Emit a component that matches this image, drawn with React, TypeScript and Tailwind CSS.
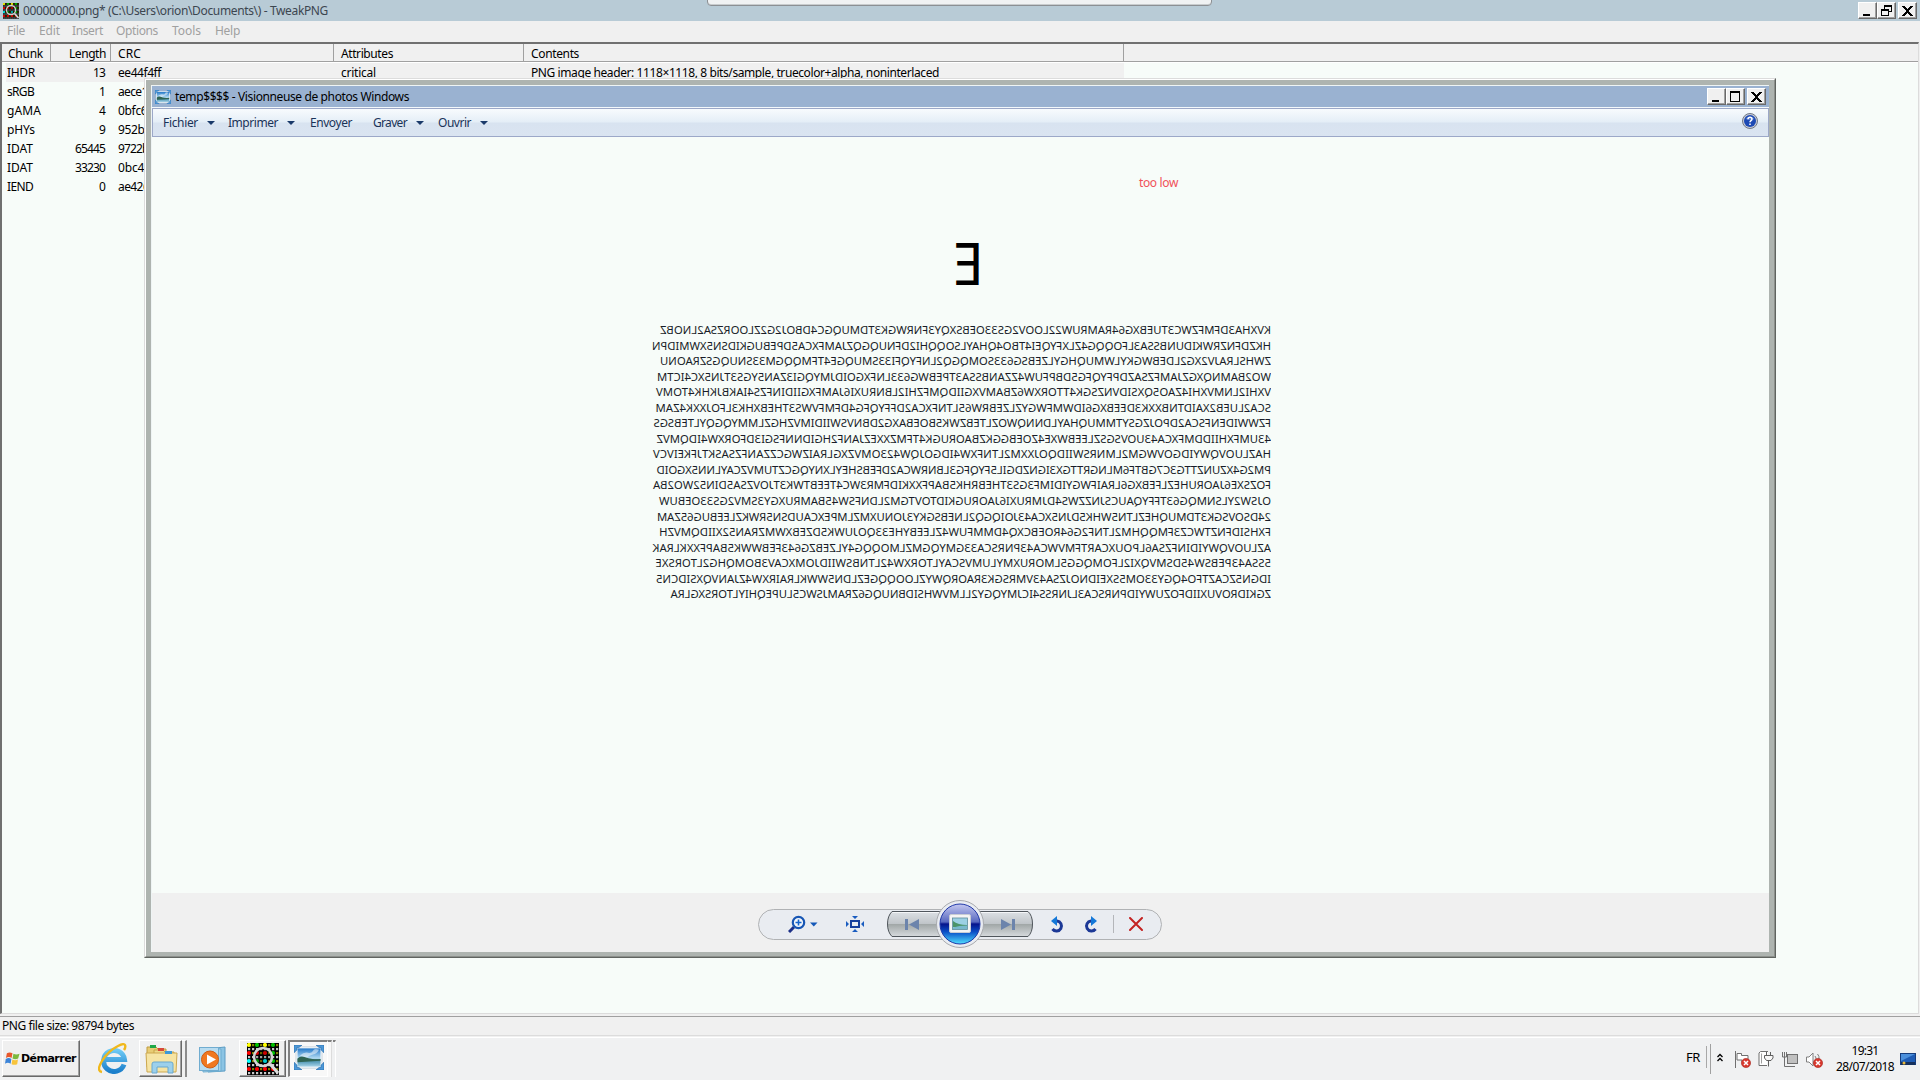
import React, { useLayoutEffect, useRef } from "react";

/** Text whose letter spacing is tuned so that it fills a given width. */
function Fit({ w, className = "", children }: { w: number; className?: string; children: string }) {
  const ref = useRef<HTMLSpanElement>(null);
  useLayoutEffect(() => {
    const el = ref.current;
    if (!el) return;
    el.style.letterSpacing = "0px";
    const natural = el.getBoundingClientRect().width;
    el.style.letterSpacing = `${(w - natural) / children.length}px`;
  }, [w, children]);
  return (
    <span ref={ref} className={`inline-block whitespace-pre ${className}`}>
      {children.split(/(J)/).map((part, i) =>
        part === "J" ? (
          <span key={i} className="font-['Lato']">J</span>
        ) : (
          part
        ),
      )}
    </span>
  );
}

const LINES: [string, number][] = [
  ["KVXHA3DFMFZWC3TUEBXG64RAMRUW22LOOV2GS33OEBSXQY3FNRWGK3TDMUQGC4DBOJ2G2ZLOORZSA2LNOBZ", 611],
  ["HKZDFNZRWKIDUNBSSA3LFOQQG4ZLXFYQEI4TBO4QHAYLSOQQHI2DFNUQGQZJAMFXCA5DPEBUGKIDSN5XWMIDPN", 619],
  ["ZWHSLRAJV2XG2LDEBWGKYLWMUQHGYLZEBSG633SOMQGQ2LNFYQFI33SMUQGE4TFMQQGM33SNUQGSZRAONU", 611],
  ["WO2BAMNQXGZJAMFZSAZDPFYQFG5DBPFUW4ZZANBSSA3TPEBWG633LNFXGOIDJMYQGI3ZAN5YGS3TJN5XC4ICTM", 614],
  ["VXHI2LNMVXHI4ZAO5QXSIDVNZSGK4TTORXW6ZBAMVXGIIDQMFZHI2LBNRUXI6JAMFXGIIDINFZS4IAKBJKHK4TOMV", 615],
  ["SCA2LUEB2XAIDTNBXXK3DEEBXG6IDWMFWGYZLZEBRW65LTNFXCA2DFFYQFG4DFMFVWS3THEBXHK3LFOJXXK4ZAM", 615.5],
  ["FZWWIDENFSCA2DPOJZGSYTMMUQHAYLDNNQWOZLTEBZWK5BOEBAXG2DBNVSWIIDIMVZHGZLMMYQGQYLTEBSGS", 617.5],
  ["43UMFXHIIDDMFXCA43UOVSGSZLEEBWXE4ZOEBGGKZBAORUGK4TFMZXXEZJANF2HGIDNNFSGI3DFORXW4IDQMVZ", 614.5],
  ["HAZLUOVQWYIDGOVWGM2LMNRSWIIDQOJXXM2LTNFXW4IDGOJQW423OMVZXGLRAIZWGCZZANFZSASKTJFKEIVCV", 618],
  ["PM2G4XZUNZTTG3C7GBTF6MLNGRTTGX3IGNZDGIL5FYQFG3LBNRWCA2DFEBSHEYLXNYQGCZTUMVZCAYLNN5XGOID", 614.5],
  ["FOZSXE6JAORUHEZLFEBXG6LRAIFWGYIDIMF3GS3THEBRHK5BAPFXXKIDFMR3WC4TEEBTWK3TJOVZSA5DIN52WO2BA", 618],
  ["OJSW2YLSNMQG63TFFYQAUCSJNZZWS4DJMRUXI6JAORUGKIDTOVTGM2LDNFSW45BAMRUXGY3SMV2GS33OEBUW", 612],
  ["24DSOVSGK3TDMUQHEZLTN5WHK5DJN5XCA43JOIQGQ2LNEBSGKY3JONUXMZLMPEXCAUDSN5RWKZLEEBUG65ZAM", 614],
  ["FXHSIDFNZTWCZ3FMQQHM2LTNF2G64ROEBCXQ4DMMFUW4ZLEEBYHE33QOJUWK5DZEBXWMZRAN52XIIDQMVZH", 612],
  ["AZLUOVQWYIDINFZSA6LPOUXCARTFMVWCA43PNRSCA33GMYQGMZLMOQQG4YLZEBZG643FEBWWK5BAPFXXKLRAK", 618.5],
  ["5SSA43PEBSW45DSMVQXI2LFOMQGG5LMORUXMYLUMVSCAYLTORXW42LTNBSWIIDJOMXCAV3BOMQHG2LTORSXE", 615.5],
  ["IDGN5ZCAZTFO4QGY33OM5SXEIDNOJZSA43VMRSGK3RAORQWYZLOOQQGEZLDN5WWKLRAIRXW4ZJANVQXSIDCN5", 615],
  ["ZGKIDROVUXIIDFOZUWYIDPNRSCA3LJNRSS4ICJMYQGY2LLMVWHSIDBNUQG6ZRAMJSWC5LUPEQHIYLTORSXGLRA", 600.5],
];

const ROWS: [string, number, string, number, string, number][] = [
  ["IHDR", 28, "13", 12, "ee44f4ff", 43],
  ["sRGB", 27, "1", 6, "aece1ce9", 47],
  ["gAMA", 34, "4", 6, "0bfc6105", 49],
  ["pHYs", 28, "9", 6, "952b0e1b", 53],
  ["IDAT", 26, "65445", 30, "9722bd0c", 48],
  ["IDAT", 26, "33230", 30, "0bc4e1a7", 53],
  ["IEND", 26, "0", 6, "ae426082", 50],
];

function CaptionButton({ children }: { children: React.ReactNode }) {
  return (
    <div className="flex h-[17px] w-[19px] items-center justify-center border border-t-white border-l-white border-r-[#696969] border-b-[#696969] bg-[#f0f0f0] shadow-[inset_-1px_-1px_0_#a0a0a0]">
      <svg width="13" height="13" viewBox="0 0 13 13" shapeRendering="crispEdges">
        {children}
      </svg>
    </div>
  );
}

const Minimize = () => <path d="M2 10h7v2H2z" />;
const Maximize = () => <path d="M1 1h10v11H1zM2 3v8h8V3z" fillRule="evenodd" />;
const Restore = () => <path d="M4 1h8v7H9v4H1V5h3zM5 3v2h4v2h2V3zM2 7v4h6V7z" fillRule="evenodd" />;
const Close = () => (
  <path d="M1 2h3v1h1v1h1v1h1V4h1V3h1V2h3v1h-1v1h-1v1H9v1H8v2h1v1h1v1h1v1h1v1H9v-1H8v-1H7V9H6v1H5v1H4v1H1v-1h1v-1h1V9h1V8h1V6H4V5H3V4H2V3H1z" />
);

function PngIcon({ size }: { size: number }) {
  const top = ["#ffff00", "#808000", "#00c000", "#808000", "#ffff00", "#808000", "#00c000", "#808000"];
  return (
    <svg width={size} height={size} viewBox="0 0 32 32">
      <rect width="32" height="32" fill="#000" />
      {Array.from({ length: 64 }, (_, i) => {
        const c = i % 8;
        const r = Math.floor(i / 8);
        let fill = "#808000";
        if (r === 0) fill = top[c];
        else if (r === 1 || r === 3 || r === 5 || r === 7) fill = "#c8c8c8";
        else if (r === 4) fill = c % 4 === 0 ? "#00ffff" : c % 4 === 2 ? "#00c000" : "#808000";
        else if (c % 2 === 0) fill = r === 2 && c === 6 ? "#00c000" : "#ff0000";
        const big = r % 2 === 0 && c % 2 === 0;
        return big ? (
          <circle key={i} cx={c * 4 + 2} cy={r * 4 + 2} r="2.1" fill={fill} />
        ) : (
          <rect key={i} x={c * 4 + 1} y={r * 4 + 1} width="2.2" height="2.2" fill={fill} />
        );
      })}
      <path d="M23 21l8 9" stroke="#dcdcdc" strokeWidth="3.2" />
      <circle cx="16" cy="14" r="9" fill="#000" fillOpacity="0.2" stroke="#d4d4d4" strokeWidth="2.6" />
    </svg>
  );
}

function PhotoIcon({ w, h }: { w: number; h: number }) {
  return (
    <svg width={w} height={h} viewBox="0 0 30 26" preserveAspectRatio="none" className="shrink-0">
      <defs>
        <linearGradient id="sky" x1="0" y1="0" x2="0" y2="1">
          <stop offset="0" stopColor="#2478c8" />
          <stop offset="0.55" stopColor="#b4dcf4" />
          <stop offset="0.6" stopColor="#4c8c9c" />
          <stop offset="0.75" stopColor="#5ca0bc" />
          <stop offset="1" stopColor="#a8d4e8" />
        </linearGradient>
      </defs>
      <rect x="2" y="2" width="26" height="22" fill="#f8fbfd" stroke="#a8bccc" strokeWidth="0.6" />
      <rect x="3.500" y="3.500" width="23" height="19" fill="url(#sky)" />
      <path d="M6 11q4-4 8-3t5-2 6-1q-2 4-6 5t-6 3-7-2z" fill="#fff" fillOpacity="0.5" />
      <path d="M3.500 14q3-3 7-1.500t8 2 8 0v2q-12 1-23 1.500z" fill="#2f6454" />
      <path d="M0 0h8L5 2.500H3V5L0 8zM22 0h8v8l-3-3V2.500h-2zM0 18l3 3v2.500h2L8 26H0zM30 18v8h-8l3-2.500h2V21z" fill="#4c98d8" stroke="#2a6cab" strokeWidth="0.7" />
    </svg>
  );
}

const Caret = () => (
  <svg width="8" height="4" viewBox="0 0 8 4">
    <path d="M0 0h8L4 4z" fill="#1a3a6a" />
  </svg>
);

function TaskButton({ className, children }: { className: string; children: React.ReactNode }) {
  return (
    <div className={`flex h-[37px] items-center border border-t-white border-l-white border-r-[#696969] border-b-[#696969] bg-[#f0f0f0] shadow-[inset_-1px_-1px_0_#a0a0a0] ${className}`}>
      {children}
    </div>
  );
}

const ErrorBadge = () => (
  <>
    <circle cx="12" cy="12" r="4.600" fill="#d8382e" stroke="#a82820" strokeWidth="0.6" />
    <path d="M10 10l4 4M14 10l-4 4" stroke="#fff" strokeWidth="1.500" />
  </>
);

function MainWindow() {
  return (
    <div className="flex h-[1037px] flex-col bg-[#f0f0f0]">
      <div className="flex h-[21px] items-center bg-[#b8cbd6] pr-[3px] pl-[3px]">
        <PngIcon size={16} />
        <Fit w={305} className="ml-[4px] text-[#3c4650]">
          {"00000000.png* (C:\\Users\\orion\\Documents\\) - TweakPNG"}
        </Fit>
        <div className="ml-auto flex">
          <CaptionButton><Minimize /></CaptionButton>
          <CaptionButton><Restore /></CaptionButton>
          <div className="w-[2px]" />
          <CaptionButton><Close /></CaptionButton>
        </div>
      </div>
      <div className="flex h-[21px] items-center pb-[2px] pl-[7px] text-[#a0a0a0]">
        <div className="w-[32px]"><Fit w={18}>File</Fit></div>
        <div className="w-[33px]"><Fit w={21}>Edit</Fit></div>
        <div className="w-[44px]"><Fit w={31}>Insert</Fit></div>
        <div className="w-[56px]"><Fit w={42}>Options</Fit></div>
        <div className="w-[43px]"><Fit w={29}>Tools</Fit></div>
        <Fit w={25}>Help</Fit>
      </div>
      <div className="mr-[1px] flex h-[972px] flex-col border-t-2 border-r border-b border-l-2 border-t-[#707070] border-r-[#dcdcdc] border-b-[#dcdcdc] border-l-[#707070] bg-[#f7fcf9]">
        <div className="flex h-[18px] shrink-0 items-center border-b border-[#a0a0a0] bg-[#f0f0f0]">
          <div className="flex h-[17px] w-[49px] items-center border-r border-[#a0a0a0] pt-[2px] pl-[6px]"><Fit w={35}>Chunk</Fit></div>
          <div className="flex h-[17px] w-[60px] items-center justify-end border-r border-[#a0a0a0] pt-[2px] pr-[4px]"><Fit w={37}>Length</Fit></div>
          <div className="flex h-[17px] w-[223px] items-center border-r border-[#a0a0a0] pt-[2px] pl-[7px]"><Fit w={23}>CRC</Fit></div>
          <div className="flex h-[17px] w-[190px] items-center border-r border-[#a0a0a0] pt-[2px] pl-[7px]"><Fit w={52}>Attributes</Fit></div>
          <div className="flex h-[17px] w-[600px] items-center border-r border-[#a0a0a0] pt-[2px] pl-[7px]"><Fit w={48}>Contents</Fit></div>
        </div>
        <div className="h-px shrink-0 bg-white" />
        {ROWS.map(([name, nw, len, lw, crc, cw], i) => (
          <div key={i} className={`ml-[4px] flex h-[19px] w-[1118px] shrink-0 items-center pl-[1px] ${i === 0 ? "bg-[#f0f0f0]" : ""}`}>
            <div className="w-[45px]"><Fit w={nw}>{name}</Fit></div>
            <div className="flex w-[53px] justify-end"><Fit w={lw}>{len}</Fit></div>
            <div className="w-[223px] pl-[13px]"><Fit w={cw}>{crc}</Fit></div>
            {i === 0 && (
              <>
                <div className="w-[190px] pl-[13px]"><Fit w={35}>critical</Fit></div>
                <div className="pl-[13px]"><Fit w={408}>PNG image header: 1118×1118, 8 bits/sample, truecolor+alpha, noninterlaced</Fit></div>
              </>
            )}
          </div>
        ))}
      </div>
      <div className="h-[2px]" />
      <div className="flex h-[20px] items-center border-t border-b border-t-[#a0a0a0] border-b-[#dcdcdc] pl-[2px]">
        <Fit w={132}>PNG file size: 98794 bytes</Fit>
      </div>
    </div>
  );
}

function ViewerWindow() {
  return (
    <div className="absolute top-[78px] left-[144px] h-[880px] w-[1632px] border-t border-r border-b border-l border-t-[#dcdcdc] border-r-[#606460] border-b-[#606460] border-l-[#dcdcdc] bg-[#aeb4b0]">
      <div className="h-full border-t border-r border-b border-l border-t-white border-r-[#8c908c] border-b-[#8c908c] border-l-white p-[5px] pb-[4px]">
        <div className="flex h-full flex-col border-t border-l border-[#eef4f4] bg-[#f0f0f0]">
          <div className="flex h-[21px] shrink-0 items-center bg-[#9ab2d1] pr-[3px] pl-[3px]">
            <PhotoIcon w={16} h={14} />
            <Fit w={234} className="ml-[4px]">temp$$$$ - Visionneuse de photos Windows</Fit>
            <div className="ml-auto flex">
              <CaptionButton><Minimize /></CaptionButton>
              <CaptionButton><Maximize /></CaptionButton>
              <div className="w-[2px]" />
              <CaptionButton><Close /></CaptionButton>
            </div>
          </div>
          <div className="h-[1px] shrink-0 bg-[#f4f8fb]" />
          <div className="flex h-[29px] shrink-0 items-center border border-[#9ca8c8] bg-[linear-gradient(#f8fbfd_0%,#e4eef7_48%,#d8e3f0_52%,#dae4f1_100%)] pl-[10px] text-[#1a3358]">
            <div className="flex w-[65px] items-center gap-[9px]"><Fit w={35}>Fichier</Fit><Caret /></div>
            <div className="flex w-[82px] items-center gap-[9px]"><Fit w={50}>Imprimer</Fit><Caret /></div>
            <div className="w-[63px]"><Fit w={42}>Envoyer</Fit></div>
            <div className="flex w-[65px] items-center gap-[9px]"><Fit w={34}>Graver</Fit><Caret /></div>
            <div className="flex items-center gap-[9px]"><Fit w={33}>Ouvrir</Fit><Caret /></div>
            <svg className="mr-[10px] mb-[3px] ml-auto" width="16" height="16" viewBox="0 0 16 16">
              <circle cx="8" cy="8" r="7.5" fill="#c8ccd4" stroke="#707888" />
              <circle cx="8" cy="8" r="6" fill="#1c49b4" />
              <path d="M3.5 6a5 4 0 0 1 9 0q-4.500 2-9 0z" fill="#7c9ce4" fillOpacity="0.6" />
              <path d="M6 6.200q0-2 2-2t2 1.800q0 1-1 1.700t-1 1.500M8 10.600v1.500" fill="none" stroke="#fff" strokeWidth="1.500" />
            </svg>
          </div>
          <div className="h-[756px] shrink-0 bg-[#f7fcf9]">
            <div className="flex h-[90px] items-center pt-[1px] pl-[987px] text-[12px] leading-none text-[#f0525a]">
              <Fit w={39}>too low</Fit>
            </div>
            <div className="flex h-[74px] items-center pb-[4px] pl-[800px] text-[59px] leading-none text-black">
              <span className="-scale-x-[0.95]">E</span>
            </div>
            <div className="ml-[501px] w-[618px] -scale-x-100 pt-[21px] text-[11.3px] text-[#181c28]">
              {LINES.map(([t, w], i) => (
                <div key={i} className="h-[15.56px] leading-[15.56px]">
                  <Fit w={w}>{t}</Fit>
                </div>
              ))}
            </div>
          </div>
          <div className="flex h-[58px] shrink-0 items-center justify-center pt-[4px] pr-[2px]">
            <div className="flex h-[31px] w-[404px] items-center rounded-full border border-[#b0b2b4] bg-[#e9ecf1] pl-[29px]">
              <svg width="30" height="18" viewBox="0 0 30 18">
                <path d="M1 17l5-5" stroke="#1c2f88" strokeWidth="3" />
                <circle cx="10.500" cy="7.500" r="5.700" fill="#f2f6fb" stroke="#1756b4" strokeWidth="2.200" />
                <path d="M7.500 7.500h6M10.500 4.500v6" stroke="#1464cc" strokeWidth="1.600" />
                <path d="M22 7.500h7.500l-3.750 4z" fill="#1458b8" />
              </svg>
              <svg className="ml-[28px]" width="18" height="16" viewBox="0 0 18 16">
                <rect x="5" y="5" width="8" height="6" fill="none" stroke="#153e9c" strokeWidth="2" />
                <path d="M6 0h6L9 3zM6 16h6l-3-3zM0 5v6l3-3zM18 5v6l-3-3z" fill="#1a5cc0" />
              </svg>
              <svg className="ml-[22px]" width="148" height="50" viewBox="0 0 148 50">
                <defs>
                  <linearGradient id="bar" x1="0" y1="0" x2="0" y2="1">
                    <stop offset="0" stopColor="#dde1e5" />
                    <stop offset="0.48" stopColor="#c0c5c9" />
                    <stop offset="0.52" stopColor="#a2a8a8" />
                    <stop offset="1" stopColor="#d6dadd" />
                  </linearGradient>
                  <linearGradient id="orb" x1="0" y1="0" x2="0" y2="1">
                    <stop offset="0" stopColor="#c4c8f0" />
                    <stop offset="0.45" stopColor="#5868c0" />
                    <stop offset="0.5" stopColor="#06148c" />
                    <stop offset="0.7" stopColor="#0a50c8" />
                    <stop offset="1" stopColor="#50e0ff" />
                  </linearGradient>
                </defs>
                <path d="M6 12.500h136q4.500 4 4.500 12.500T142 37.500H6Q1.500 33 1.500 25T6 12.500z" fill="url(#bar)" stroke="#50565c" />
                <path d="M6.500 13.500h135" stroke="#f4f6f8" />
                <circle cx="74" cy="25" r="23.500" fill="#e9ecf1" stroke="#a8aaae" />
                <circle cx="74" cy="25" r="20" fill="url(#orb)" stroke="#2038a8" />
                <rect x="63.500" y="15.500" width="21" height="18" rx="1.500" fill="#f4f4f4" stroke="#c8ccd4" />
                <rect x="66.500" y="19" width="15" height="11.500" fill="#9cd0e4" stroke="#5c8c9c" strokeWidth="0.800" />
                <path d="M67 22q5 4 14 4v2H67z" fill="#4c9468" />
                <path d="M67 28.500q6-2 14-2v3.500H67z" fill="#78b8cc" />
                <path d="M19 20h3v11h-3zM33 20v11l-10-5.500zM115 20v11l10-5.500zM126 20h3v11h-3z" fill="#6c84ac" />
              </svg>
              <svg className="ml-[17px]" width="13" height="17" viewBox="0 0 13 17">
                <path d="M4 5h2a5 5 0 1 1-4.500 8" fill="none" stroke="#1c3896" strokeWidth="3" />
                <path d="M0 5L6 0v10z" fill="#1478d8" />
              </svg>
              <svg className="ml-[20px]" width="13" height="17" viewBox="0 0 13 17">
                <path d="M9 5H7a5 5 0 1 0 4.500 8" fill="none" stroke="#1c3896" strokeWidth="3" />
                <path d="M13 5L7 0v10z" fill="#1478d8" />
              </svg>
              <div className="ml-[16px] h-[18px] w-[1px] bg-[#b4b6ba]" />
              <svg className="ml-[15px]" width="14" height="14" viewBox="0 0 14 14">
                <path d="M1 1l12 12M13 1L1 13" stroke="#c42222" strokeWidth="2" strokeLinecap="round" />
              </svg>
            </div>
          </div>
        </div>
      </div>
    </div>
  );
}

function Taskbar() {
  return (
    <div className="flex h-[43px] items-start border-t border-white bg-[#f0f1f2] pt-[2px] pl-[2px]">
      <TaskButton className="w-[78px] pl-[2px]">
        <svg width="15" height="15" viewBox="0 0 16 15">
          <path d="M2 2q3-2 6 0L7 7Q4 5 1 7z" fill="#e8582c" />
          <path d="M9 2.500q3 1.500 6.500 0L14 7.500q-3 1.500-6 0z" fill="#7cb83c" />
          <path d="M.8 8Q4 6 6.800 8L6 13Q3 11 0 13z" fill="#3c84d8" />
          <path d="M7.800 8.500q3 1.500 6 0L13 13.500q-3 1.500-6 0z" fill="#f8c43c" />
        </svg>
        <Fit w={55} className="ml-[1px] font-['DejaVu_Sans'] text-[11px] font-bold">Démarrer</Fit>
      </TaskButton>
      <svg className="mt-[3px] ml-[18px]" width="30" height="31" viewBox="0 0 30 31">
        <defs>
          <linearGradient id="ie" x1="0" y1="0" x2="0" y2="1">
            <stop offset="0" stopColor="#6cc8f4" />
            <stop offset="1" stopColor="#1c80cc" />
          </linearGradient>
        </defs>
        <path d="M26 21.500A10.500 10.500 0 1 1 26.500 16.500H8" fill="none" stroke="url(#ie)" strokeWidth="5" />
        <path d="M4 29Q-2 28 4 18T20 3q6-3 7-1t-1 5" fill="none" stroke="#f0b81c" strokeWidth="2.400" />
      </svg>
      <TaskButton className="ml-[11px] w-[43px] justify-center pl-[2px]">
        <svg width="34" height="31" viewBox="0 0 34 31">
          <path d="M2 4h9l2 2h8v18H2z" fill="#e8cc74" stroke="#c09c40" />
          <rect x="5" y="2" width="6" height="3" fill="#20a848" />
          <path d="M9 7h9l2 2h9v18H9z" fill="#f0d888" stroke="#c8a448" />
          <rect x="13" y="5" width="6" height="3" fill="#d84838" />
          <path d="M1 10h31l-1 19H2z" fill="#f6e4a4" stroke="#cca850" />
          <rect x="20" y="8" width="7" height="3" fill="#3c98d8" />
          <path d="M7 30V21q0-2 2-2h17q2 0 2 2v9h-5v-6H12v6z" fill="#9cd0ec" stroke="#68a8d0" />
        </svg>
      </TaskButton>
      <div className="h-[37px] w-[5px] border-t border-r-2 border-t-white border-r-[#8c8c8c] bg-[#f0f0f0]" />
      <svg className="mt-[6px] ml-[12px]" width="27" height="27" viewBox="0 0 27 27">
        <path d="M7 3l19-2v24l-17 1z" fill="#8cc4e4" stroke="#5c9cc4" />
        <path d="M4 2l18 1v22l-18 1z" fill="#a8d4ec" stroke="#6cacd0" />
        <rect x="0.500" y="1.500" width="19" height="23" fill="#b8dcf0" stroke="#70acd0" />
        <circle cx="11" cy="13.500" r="8.500" fill="#f07820" stroke="#d05c10" />
        <path d="M8 8.500l9 5-9 5z" fill="#fff" />
      </svg>
      <TaskButton className="ml-[13px] w-[47px] justify-center">
        <PngIcon size={32} />
      </TaskButton>
      <div className="ml-[2px] flex h-[37px] w-[40px] items-center justify-center border-t-2 border-r border-b border-l-2 border-t-[#808080] border-r-white border-b-white border-l-[#808080] bg-[#f8f8f8] pb-[3px]">
        <PhotoIcon w={30} h={25} />
      </div>
      <div className="h-[37px] w-[4px] border-t-2 border-r border-t-[#808080] border-r-[#dcdcdc] bg-[#f8f8f8]" />
      <div className="ml-[1px] h-[37px] w-[3px] border-t-2 border-r border-t-[#808080] border-r-white" />

      <div className="ml-auto flex h-[37px] items-center pr-[4px]">
        <Fit w={14} className="mb-[4px] text-[13px]">FR</Fit>
        <div className="mb-[3px] ml-[6px] h-[22px] w-[1px] bg-[#a8a8a8]" />
        <div className="ml-[3px] h-[30px] w-[1px] bg-[#a0a0a0]" />
        <svg className="mb-[2px] ml-[6px]" width="6" height="9" viewBox="0 0 6 9">
          <path d="M.5 4L3 1.500 5.500 4M.5 8L3 5.500 5.500 8" fill="none" stroke="#000" strokeWidth="1.300" />
        </svg>
        <svg className="mt-px ml-[11px]" width="17" height="17" viewBox="0 0 17 17">
          <path d="M1.500 0v17M3 2.500h4.500v2H14V11H8V9H3z" fill="#fff" stroke="#707070" />
          <ErrorBadge />
        </svg>
        <svg className="ml-[7px]" width="16" height="17" viewBox="0 0 16 17">
          <path d="M10 1.500H2.500L1 3v12.500h8" fill="#fff" stroke="#707070" />
          <path d="M3.500 3.500v10" stroke="#a0a0a0" />
          <path d="M8.500 2v3.500M12.500 2v3.500M6.500 5.500h8.500v2.500L13 10.500H8.500L6.500 8zM10.500 10.500v6" fill="#f8f8f8" stroke="#606060" />
        </svg>
        <svg className="mt-px ml-[8px]" width="16" height="17" viewBox="0 0 16 17">
          <rect x="5.500" y="3.500" width="10" height="9" fill="#c0c0c0" stroke="#707070" />
          <path d="M.5 1v5h4V1M2.500 1v14.500M5 15.500h8M2.500 15.500h3" fill="none" stroke="#707070" />
        </svg>
        <svg className="mt-px ml-[8px]" width="17" height="17" viewBox="0 0 17 17">
          <path d="M.5 6H3l4-4v13l-4-4H.5zM9 5q1.500 2 1 4M11.500 3q2 2 1.500 5" fill="#fff" stroke="#808080" />
          <ErrorBadge />
        </svg>
        <div className="ml-[13px] flex w-[58px] flex-col items-center leading-[16px]">
          <Fit w={27}>19:31</Fit>
          <Fit w={58}>28/07/2018</Fit>
        </div>
        <svg className="mt-[2px] ml-[6px]" width="16" height="13" viewBox="0 0 16 13">
          <rect x="0.500" y="0.500" width="15" height="11" fill="#1f5cb4" stroke="#153c7c" />
          <path d="M1 1h14L1 8z" fill="#4c90dc" />
          <rect x="1" y="9" width="14" height="3" fill="#16305c" />
          <circle cx="4" cy="10" r="1.500" fill="#e8b83c" />
        </svg>
      </div>
    </div>
  );
}

export default function App() {
  return (
    <div className="relative h-[1080px] w-[1920px] overflow-hidden bg-[#f0f0f0] font-['Noto_Sans','Open_Sans',sans-serif] text-[12px] leading-[16px] text-black">
      <MainWindow />
      <Taskbar />
      <div className="absolute top-[-4px] left-[707px] h-[10px] w-[505px] rounded-[4px] border border-[#8c9094] bg-[#f0f2f3] shadow-[inset_0_-1px_0_#c8ccce]" />
      <ViewerWindow />
    </div>
  );
}
